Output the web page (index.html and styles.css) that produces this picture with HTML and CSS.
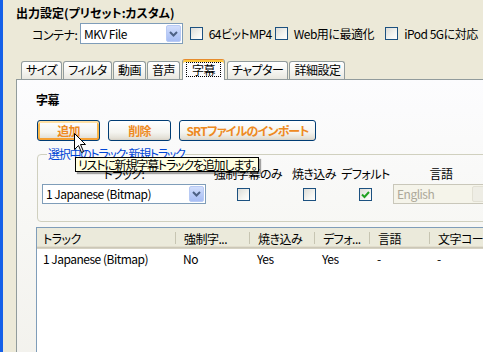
FILE: index.html
```html
<!DOCTYPE html>
<html lang="ja">
<head>
<meta charset="utf-8">
<title>出力設定</title>
<link rel="stylesheet" href="styles.css">
</head>
<body>
<div class="window">
  <div class="title">出力設定(プリセット:カスタム)</div>

  <div class="topbar">
    <span class="lbl">コンテナ:</span>
    <div class="combo combo-top">
      <span class="combo-text">MKV File</span>
      <span class="drop"><svg width="9" height="6" viewBox="0 0 9 6"><path d="M1 1 L4.5 4.5 L8 1" fill="none" stroke="#4D6185" stroke-width="2"/></svg></span>
    </div>
    <label class="opt opt-a"><span class="cb"></span><span>64ビットMP4</span></label>
    <label class="opt opt-b"><span class="cb"></span><span>Web用に最適化</span></label>
    <label class="opt opt-c"><span class="cb"></span><span>iPod 5Gに対応</span></label>
  </div>

  <div class="tabs">
    <div class="tab">サイズ</div>
    <div class="tab">フィルタ</div>
    <div class="tab">動画</div>
    <div class="tab">音声</div>
    <div class="tab active"><span class="focus">字幕</span></div>
    <div class="tab">チャプター</div>
    <div class="tab">詳細設定</div>
  </div>

  <div class="panel">
    <div class="heading">字幕</div>

    <div class="buttons">
      <button class="btn hot">追加</button>
      <button class="btn">削除</button>
      <button class="btn wide">SRTファイルのインポート</button>
    </div>

    <fieldset class="group">
      <legend>選択中のトラック: 新規トラック</legend>
      <div class="grid">
        <div class="glabel">トラック:</div>
        <div class="glabel">強制字幕のみ</div>
        <div class="glabel">焼き込み</div>
        <div class="glabel">デフォルト</div>
        <div class="glabel">言語</div>

        <div class="combo combo-track">
          <span class="combo-text">1 Japanese (Bitmap)</span>
          <span class="drop"><svg width="9" height="6" viewBox="0 0 9 6"><path d="M1 1 L4.5 4.5 L8 1" fill="none" stroke="#4D6185" stroke-width="2"/></svg></span>
        </div>
        <div class="gcell shift"><span class="cb"></span></div>
        <div class="gcell shift"><span class="cb"></span></div>
        <div class="gcell"><span class="cb checked"><svg width="11" height="11" viewBox="0 0 11 11"><path d="M2 5.5 L4.5 8 L9 3" fill="none" stroke="#21A121" stroke-width="2"/></svg></span></div>
        <div class="combo combo-lang disabled">
          <span class="combo-text">English</span>
          <span class="drop"></span>
        </div>
      </div>
    </fieldset>

    <div class="list">
      <div class="lv-head">
        <div class="hc c1">トラック</div>
        <div class="hc c2">強制字...</div>
        <div class="hc c3">焼き込み</div>
        <div class="hc c4">デフォ...</div>
        <div class="hc c5">言語</div>
        <div class="hc c6">文字コード</div>
      </div>
      <div class="lv-row">
        <div class="rc c1">1 Japanese (Bitmap)</div>
        <div class="rc c2">No</div>
        <div class="rc c3">Yes</div>
        <div class="rc c4">Yes</div>
        <div class="rc c5">-</div>
        <div class="rc c6">-</div>
      </div>
    </div>
  </div>

  <div class="tooltip">リストに新規字幕トラックを追加します。</div>
  <svg class="cursor" width="13" height="21" viewBox="0 0 13 21"><path d="M0.5 0.5 V16.5 L4.5 12.5 L7.5 19.5 L9.5 18.5 L6.5 11.5 H11.5 Z" fill="#fff" stroke="#000" stroke-width="1" stroke-linejoin="miter"/></svg>
</div>
</body>
</html>
```

FILE: styles.css
```css
html, body {
  margin: 0;
  padding: 0;
  width: 483px;
  height: 352px;
  overflow: hidden;
}

body {
  background: #ECE9D8;
  font-family: "Noto Sans CJK JP", "Liberation Sans", sans-serif;
  font-size: 12px;
  font-feature-settings: "palt";
  letter-spacing: -0.5px;
  color: #000;
}

.window {
  position: relative;
  height: 352px;
  box-sizing: border-box;
  border-left: 3px solid #1560E8;
  overflow: hidden;
}

.title {
  font-weight: bold;
  line-height: 16px;
  padding: 5px 0 0 13px;
  letter-spacing: 0;
}

/* top row */
.topbar {
  display: flex;
  align-items: center;
  height: 21px;
  margin-top: 2px;
  padding-left: 29px;
}

.lbl {
  width: 49px;
  line-height: 16px;
  padding-top: 2px;
  white-space: nowrap;
}

.combo {
  display: flex;
  align-items: stretch;
  box-sizing: border-box;
  border: 1px solid #7F9DB9;
  background: #fff;
}

.combo-text {
  flex: 1;
  padding-left: 3px;
  white-space: nowrap;
  overflow: hidden;
}

.combo-top {
  width: 105px;
  height: 21px;
  line-height: 19px;
}

.drop {
  width: 15px;
  margin: 1px;
  box-sizing: border-box;
  border: 1px solid #B8CAF4;
  border-radius: 2px;
  background: linear-gradient(#D2DEFC, #B6C9F7 60%, #A8BEF4);
  display: flex;
  align-items: center;
  justify-content: center;
}

.opt {
  display: flex;
  align-items: center;
  gap: 6px;
  line-height: 16px;
  white-space: nowrap;
  box-sizing: border-box;
}

.opt-a { width: 87px; margin-left: 7px; }
.opt-b { width: 113px; }
.opt-c { width: 100px; }

.cb {
  display: inline-flex;
  align-items: center;
  justify-content: center;
  width: 13px;
  height: 13px;
  box-sizing: border-box;
  border: 1px solid #1C5180;
  background: linear-gradient(135deg, #DCDCD7 0%, #F4F4F0 60%, #FFFFFF 100%);
  flex: none;
}

/* tabs */
.tabs {
  display: flex;
  align-items: flex-end;
  height: 20px;
  margin-top: 15px;
  padding-left: 18px;
  gap: 1px;
}

.tab {
  box-sizing: border-box;
  height: 18px;
  line-height: 16px;
  padding: 0 4px;
  border: 1px solid #919B9C;
  border-bottom: none;
  border-radius: 3px 3px 0 0;
  background: linear-gradient(#FFFFFF, #F5F5F1 55%, #E8E7E0);
  white-space: nowrap;
}

.tab.active {
  height: 21px;
  margin: 0 1px -1px 1px;
  padding: 2px 4px 0;
  border-top: 1px solid #E68B2C;
  box-shadow: inset 0 2px 0 #FFC73C;
  background: #FCFCFE;
  position: relative;
  z-index: 1;
}

.focus {
  display: inline-block;
  padding: 0 5px;
  line-height: 13px;
  outline: 1px dotted #000;
  outline-offset: 0;
}

/* panel */
.panel {
  box-sizing: border-box;
  margin-left: 13px;
  width: 520px;
  height: 300px;
  border: 1px solid #919B9C;
  background: linear-gradient(#FCFCFE, #F7F7F4 50%, #F2F1EC);
  padding: 13px 0 0 19px;
}

.heading {
  font-weight: bold;
  line-height: 14px;
}

.buttons {
  display: flex;
  gap: 8px;
  margin-top: 13px;
  padding-left: 1px;
}

.btn {
  box-sizing: border-box;
  width: 63px;
  height: 21px;
  padding: 0;
  border: 1px solid #003C74;
  border-radius: 3px;
  background: linear-gradient(#FFFFFF, #F4F4F0 60%, #E3E0D6 90%, #D6D0C5);
  font-family: inherit;
  font-feature-settings: "palt";
  font-size: 12px;
  font-weight: bold;
  letter-spacing: -0.8px;
  color: #EE8A22;
  line-height: 17px;
}

.btn.wide { width: 137px; }

.btn.hot {
  box-shadow: inset 0 2px 0 #FFE1A6, inset 0 -2px 0 #F5A135, inset 2px 0 0 #F8B84C, inset -2px 0 0 #F8B84C;
}

/* group box */
.group {
  box-sizing: border-box;
  width: 470px;
  margin: 5px 0 0 1px;
  padding: 0 0 17px 4px;
  border: 1px solid #D0D0BF;
  border-radius: 4px;
  min-inline-size: 0;
}

.group legend {
  color: #0046D5;
  padding: 0 1px;
  margin-left: 5px;
  line-height: 16px;
  letter-spacing: -1.3px;
}

.grid {
  display: grid;
  grid-template-columns: 164px 84px 48px 55px 96px;
  grid-template-rows: 14px 20px;
  row-gap: 3px;
  padding-top: 5px;
}

.glabel {
  text-align: center;
  line-height: 14px;
  white-space: nowrap;
}

.gcell {
  display: flex;
  align-items: center;
  justify-content: center;
}

.gcell.shift {
  padding-right: 10px;
}

.combo-track {
  height: 20px;
  line-height: 18px;
}

.combo-lang {
  height: 20px;
  line-height: 18px;
}

.combo.disabled {
  border-color: #C9C7BA;
  background: #F5F4EA;
  color: #ACA899;
}

.combo.disabled .drop {
  border-color: #E2E0D4;
  background: #EEEDE5;
}

/* list view */
.list {
  box-sizing: border-box;
  width: 470px;
  height: 200px;
  margin-top: 5px;
  border: 1px solid #7F9DB9;
  background: #fff;
}

.lv-head {
  display: flex;
  height: 21px;
  background: #EBEADB;
  box-shadow: inset 0 -1px 0 #D6D2C2, inset 0 -2px 0 #CBC7B8, inset 0 -3px 0 #E2DECD;
}

.hc, .rc {
  box-sizing: border-box;
  white-space: nowrap;
  overflow: hidden;
  flex: none;
}

.hc {
  position: relative;
  padding: 2px 0 0 8px;
  line-height: 17px;
}

.hc::after {
  content: "";
  position: absolute;
  right: 0;
  top: 4px;
  bottom: 5px;
  width: 1px;
  background: #C7C5B2;
  box-shadow: 1px 0 0 #fff;
}

.c1 { width: 139px; }
.c2 { width: 74px; }
.c3 { width: 65px; }
.c4 { width: 55px; }
.c5 { width: 60px; }
.c6 { width: 100px; }

.hc.c1 { padding-left: 6px; }

.lv-row {
  display: flex;
  padding-top: 2px;
  line-height: 16px;
}

.rc { padding-left: 7px; }
.rc.c1 { padding-left: 6px; }

/* overlays */
.tooltip {
  position: absolute;
  left: 72px;
  top: 157px;
  box-sizing: border-box;
  height: 15px;
  padding: 0 2px;
  border: 1px solid #000;
  background: #FFFFE1;
  line-height: 13px;
  letter-spacing: -1.2px;
  white-space: nowrap;
  box-shadow: 2px 2px 1px rgba(0, 0, 0, 0.35);
  z-index: 5;
}

.cursor {
  position: absolute;
  left: 71px;
  top: 133px;
  z-index: 6;
}
```
